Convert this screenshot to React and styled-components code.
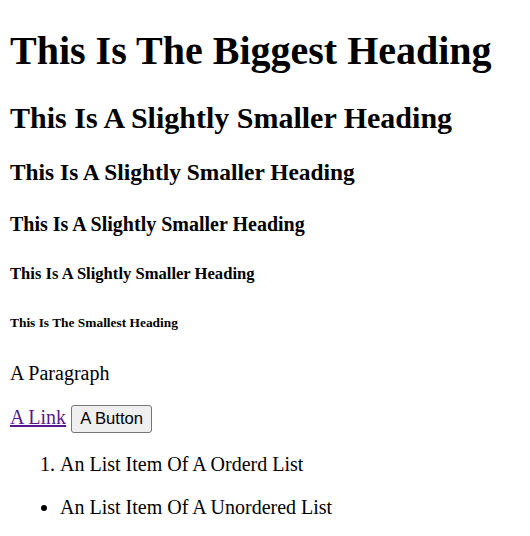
import React from "react";
import styled, { createGlobalStyle } from "styled-components";

const GlobalStyle = createGlobalStyle`
  body {
    margin: 0 10px 10px;
    font-family: "Liberation Serif", "Times New Roman", serif;
    font-size: 20px;
    color: #000;
    background: #fff;
  }
`;

const Page = styled.main`
  display: block;
`;

const Heading = styled.h1`
  font-weight: bold;
  font-size: ${(props) => props.size};
  margin: ${(props) => props.gap} 0;
`;

const Paragraph = styled.p`
  margin: 1em 0;
`;

const Link = styled.a`
  color: #551a8b;
  text-decoration: underline;
  cursor: pointer;
`;

const Button = styled.button`
  font-family: "Liberation Sans", Arial, sans-serif;
  font-size: 16.67px;
  color: #000;
  background: #efefef;
  border: 1px solid #767676;
  border-radius: 3px;
  padding: 3px 8px;
  margin: 0;
`;

const OrderedList = styled.ol`
  margin: 1em 0;
  padding-left: 50px;
`;

const UnorderedList = styled.ul`
  margin: 1em 0;
  padding-left: 50px;
  list-style: disc;
`;

const headings = [
  { tag: "h1", size: "2em", gap: "0.67em", text: "This Is The Biggest Heading" },
  { tag: "h2", size: "1.5em", gap: "0.83em", text: "This Is A Slightly Smaller Heading" },
  { tag: "h3", size: "1.17em", gap: "1em", text: "This Is A Slightly Smaller Heading" },
  { tag: "h4", size: "1em", gap: "1.33em", text: "This Is A Slightly Smaller Heading" },
  { tag: "h5", size: "0.83em", gap: "1.67em", text: "This Is A Slightly Smaller Heading" },
  { tag: "h6", size: "0.67em", gap: "2.33em", text: "This Is The Smallest Heading" },
];

export default function App() {
  return (
    <>
      <GlobalStyle />
      <Page>
        {headings.map((h) => (
          <Heading key={h.tag} as={h.tag} size={h.size} gap={h.gap}>
            {h.text}
          </Heading>
        ))}
        <Paragraph>A Paragraph</Paragraph>
        <Link href="#">A Link</Link>{" "}
        <Button>A Button</Button>
        <OrderedList>
          <li>An List Item Of A Orderd List</li>
        </OrderedList>
        <UnorderedList>
          <li>An List Item Of A Unordered List</li>
        </UnorderedList>
      </Page>
    </>
  );
}
